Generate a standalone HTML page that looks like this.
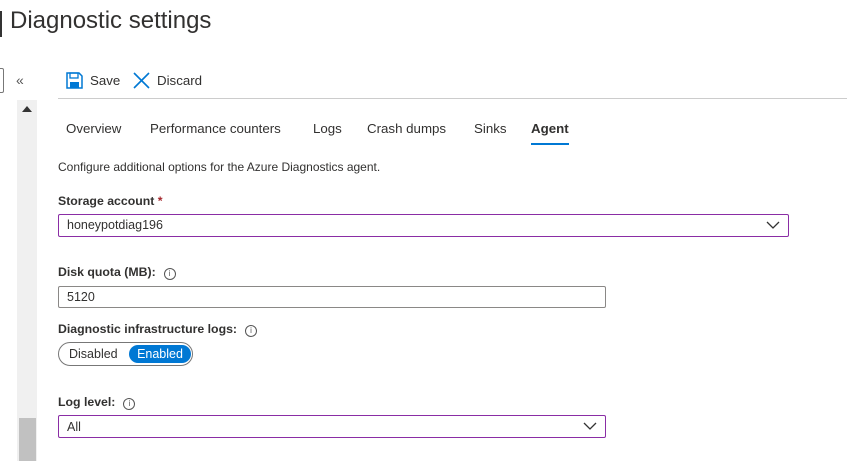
<!DOCTYPE html>
<html><head><style>
body{margin:0;width:847px;height:461px;background:#fff;position:relative;overflow:hidden;font-family:"Segoe UI","Liberation Sans",sans-serif;color:#323130}
.a{position:absolute;white-space:nowrap}
.t{font-size:13.3px}
.box{position:absolute;box-sizing:border-box;border-radius:2px;background:#fff}
.lbl{font-size:12.3px;font-weight:bold;color:#323130}
.info{display:inline-block;width:10px;height:10px;border:1px solid #555;border-radius:50%;font-size:8px;line-height:10px;text-align:center;font-weight:normal;margin-left:8px;vertical-align:0px;color:#555}
</style></head><body>
<div class="a" style="left:0;top:11px;width:2px;height:26px;background:#333"></div>
<div class="a" style="left:10px;top:7px;font-size:24px;color:#323130">Diagnostic settings</div>
<div class="box" style="left:-4px;top:68px;width:8px;height:25px;border:1px solid #777"></div>
<div class="a" style="left:16px;top:72px;font-size:14px;color:#555">«</div>
<div class="a" style="left:17px;top:100px;width:20px;height:361px;background:#f0f0f0"></div>
<div class="a" style="left:19px;top:418px;width:17px;height:43px;background:#c1c1c1"></div>
<div class="a" style="left:22px;top:106px;width:0;height:0;border-left:5px solid transparent;border-right:5px solid transparent;border-bottom:6px solid #333"></div>
<svg class="a" style="left:66px;top:72px" width="17" height="17" viewBox="0 0 17 17"><path d="M1 1h12l3 3v12H1z" fill="none" stroke="#0078d4" stroke-width="1.5"/><rect x="4" y="1" width="8" height="5" fill="none" stroke="#0078d4" stroke-width="1.3"/><rect x="4" y="10" width="9" height="6" fill="#0078d4"/></svg>
<div class="a t" style="left:90px;top:73px">Save</div>
<svg class="a" style="left:133px;top:72px" width="17" height="17"><path d="M1 1L16 16M16 1L1 16" stroke="#0078d4" stroke-width="1.6"/></svg>
<div class="a t" style="left:157px;top:73px">Discard</div>
<div class="a" style="left:58px;top:98px;width:789px;height:1px;background:#ccc"></div>
<div class="a t" style="left:66px;top:121px">Overview</div>
<div class="a t" style="left:150px;top:121px">Performance counters</div>
<div class="a t" style="left:313px;top:121px">Logs</div>
<div class="a t" style="left:367px;top:121px">Crash dumps</div>
<div class="a t" style="left:474px;top:121px">Sinks</div>
<div class="a t" style="left:531px;top:121px;font-weight:bold">Agent</div>
<div class="a" style="left:531px;top:143px;width:38px;height:2px;background:#0078d4"></div>
<div class="a" style="left:58px;top:160px;font-size:12px">Configure additional options for the Azure Diagnostics agent.</div>
<div class="a lbl" style="left:58px;top:194px">Storage account <span style="color:#a4262c">*</span></div>
<div class="box" style="left:58px;top:214px;width:731px;height:23px;border:1px solid #8a2da5"></div>
<div class="a" style="left:67px;top:218px;font-size:12.5px">honeypotdiag196</div>
<svg class="a" style="left:766px;top:221px" width="14" height="9"><path d="M1 1l6 6 6-6" fill="none" stroke="#333" stroke-width="1.3"/></svg>
<div class="a lbl" style="left:58px;top:265px">Disk quota (MB):<span class="info">i</span></div>
<div class="box" style="left:58px;top:286px;width:548px;height:22px;border:1px solid #8a8886"></div>
<div class="a" style="left:67px;top:290px;font-size:12.5px">5120</div>
<div class="a lbl" style="left:58px;top:322px">Diagnostic infrastructure logs:<span class="info">i</span></div>
<div class="box" style="left:58px;top:342px;width:135px;height:24px;border:1px solid #777;border-radius:12px"></div>
<div class="a" style="left:69px;top:347px;font-size:12.5px">Disabled</div>
<div class="a" style="left:129px;top:345px;width:62px;height:18px;background:#0078d4;border-radius:9px;color:#fff;font-size:12.5px;line-height:18px;text-align:center">Enabled</div>
<div class="a lbl" style="left:58px;top:395px">Log level:<span class="info">i</span></div>
<div class="box" style="left:58px;top:415px;width:548px;height:23px;border:1px solid #8a2da5"></div>
<div class="a" style="left:67px;top:420px;font-size:12.5px">All</div>
<svg class="a" style="left:583px;top:422px" width="14" height="9"><path d="M1 1l6 6 6-6" fill="none" stroke="#333" stroke-width="1.3"/></svg>
</body></html>
